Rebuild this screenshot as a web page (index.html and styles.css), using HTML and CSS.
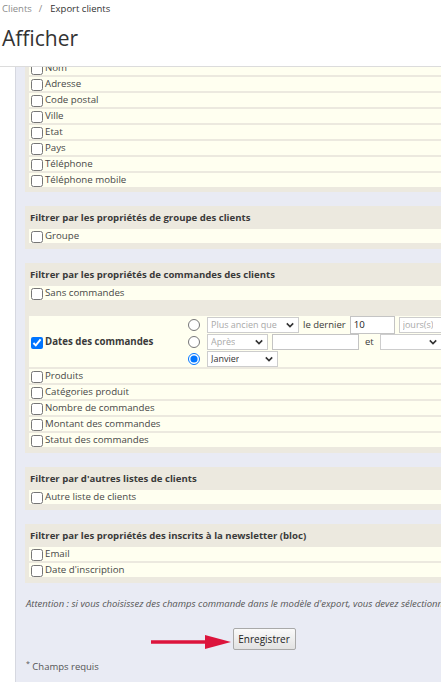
FILE: index.html
```html
<!DOCTYPE html>
<html lang="fr">
<head>
<meta charset="utf-8">
<title>Export clients</title>
<link rel="stylesheet" href="styles.css">
</head>
<body>
<div class="top">
  <div class="crumbs"><span class="c1">Clients</span><span class="sep">/</span><span class="c2">Export clients</span></div>
  <h1>Afficher</h1>
</div>
<div class="main">
  <div class="sec first">
    <div class="row"><input type="checkbox"><span>Nom</span></div>
    <div class="row"><input type="checkbox"><span>Adresse</span></div>
    <div class="row"><input type="checkbox"><span>Code postal</span></div>
    <div class="row"><input type="checkbox"><span>Ville</span></div>
    <div class="row"><input type="checkbox"><span>Etat</span></div>
    <div class="row"><input type="checkbox"><span>Pays</span></div>
    <div class="row"><input type="checkbox"><span>Téléphone</span></div>
    <div class="row"><input type="checkbox"><span>Téléphone mobile</span></div>
  </div>

  <div class="sec">
    <h2>Filtrer par les propriétés de groupe des clients</h2>
    <div class="row"><input type="checkbox"><span>Groupe</span></div>
  </div>

  <div class="sec">
    <h2>Filtrer par les propriétés de commandes des clients</h2>
    <div class="row"><input type="checkbox"><span>Sans commandes</span></div>
    <div class="row big">
      <div class="biglabel"><input type="checkbox" checked><span>Dates des commandes</span></div>
      <div class="controls">
        <div class="line">
          <input type="radio" name="d">
          <span class="sel dis w92"><span class="t">Plus ancien que</span><svg class="chev" viewBox="0 0 10 6"><path d="M1 1 L5 5 L9 1"/></svg></span>
          <span class="lbl">le dernier</span>
          <span class="inp tall w45">10</span>
          <span class="sel dis w80"><span class="t">jours(s)</span><svg class="chev" viewBox="0 0 10 6"><path d="M1 1 L5 5 L9 1"/></svg></span>
        </div>
        <div class="line">
          <input type="radio" name="d">
          <span class="sel dis w61"><span class="t">Après</span><svg class="chev" viewBox="0 0 10 6"><path d="M1 1 L5 5 L9 1"/></svg></span>
          <span class="inp w87"></span>
          <span class="lbl et">et</span>
          <span class="sel dis w62"><span class="t"></span><svg class="chev" viewBox="0 0 10 6"><path d="M1 1 L5 5 L9 1"/></svg></span>
        </div>
        <div class="line">
          <input type="radio" name="d" checked>
          <span class="sel w71"><span class="t">Janvier</span><svg class="chev" viewBox="0 0 10 6"><path d="M1 1 L5 5 L9 1"/></svg></span>
        </div>
      </div>
    </div>
    <div class="row"><input type="checkbox"><span>Produits</span></div>
    <div class="row"><input type="checkbox"><span>Catégories produit</span></div>
    <div class="row"><input type="checkbox"><span>Nombre de commandes</span></div>
    <div class="row"><input type="checkbox"><span>Montant des commandes</span></div>
    <div class="row"><input type="checkbox"><span>Statut des commandes</span></div>
  </div>

  <div class="sec">
    <h2>Filtrer par d'autres listes de clients</h2>
    <div class="row"><input type="checkbox"><span>Autre liste de clients</span></div>
  </div>

  <div class="sec">
    <h2>Filtrer par les propriétés des inscrits à la newsletter (bloc)</h2>
    <div class="row"><input type="checkbox"><span>Email</span></div>
    <div class="row"><input type="checkbox"><span>Date d'inscription</span></div>
  </div>

  <p class="attn">Attention : si vous choisissez des champs commande dans le modèle d'export, vous devez sélectionner au moins une date de commande.</p>

  <div class="actions">
    <button class="btn">Enregistrer</button>
    <svg class="arrow" viewBox="0 0 84 18"><path class="shaft" d="M2 9 L60 9"/><path class="head" d="M56 2 L82 9 L56 16 Z"/></svg>
  </div>

  <p class="req"><sup>*</sup> Champs requis</p>
</div>
</body>
</html>
```
FILE: styles.css
```css
html, body {
  margin: 0;
  padding: 0;
  background: #fff;
  overflow: hidden;
}
body {
  width: 441px;
  height: 682px;
  font-family: "Open Sans", "Noto Sans", sans-serif;
  color: #474747;
}
.top {
  height: 66px;
  border-bottom: 1px solid #dcdcdc;
}
.crumbs {
  font-size: 9.5px;
  line-height: 14px;
  padding: 2px 0 0 2px;
}
.crumbs .c1 { color: #8c8c8c; }
.crumbs .sep { color: #8c8c8c; margin: 0 8px 0 7px; }
.crumbs .c2 { color: #333; }
h1 {
  margin: 8px 0 0 2px;
  font-weight: 400;
  font-size: 21px;
  line-height: 28px;
  color: #333;
}
.main {
  margin-left: 15px;
  border-left: 1px solid #d6d8e0;
  background: #e9ebf4;
  height: 615px;
  width: 488px;
  box-sizing: border-box;
  padding: 0 0 0 9px;
  overflow: hidden;
}
.sec {
  background: #ece9df;
  padding: 0 0 6px 4px;
  margin-bottom: 14px;
}
.sec.first {
  margin-top: -6px;
  padding-bottom: 5px;
}
.sec h2 {
  margin: 0;
  padding: 4px 1px;
  font-size: 9.6px;
  line-height: 15px;
  font-weight: 700;
  color: #3a3a3a;
}
.row {
  background: #fffff0;
  height: 14px;
  margin-bottom: 2px;
  display: flex;
  align-items: center;
  font-size: 9.7px;
  line-height: 14px;
  white-space: nowrap;
}
.row:last-child { margin-bottom: 0; }
.row input[type=checkbox] {
  width: 12px;
  height: 12px;
  margin: 2px 2px 0 2px;
}
.row.big {
  height: auto;
  margin-top: 16px;
  display: grid;
  grid-template-columns: 159px auto;
  align-items: center;
}
.biglabel {
  display: flex;
  align-items: center;
  font-weight: 700;
  color: #3a3a3a;
}
.controls {
  display: flex;
  flex-direction: column;
}
.line {
  height: 17px;
  display: flex;
  align-items: center;
  gap: 4px;
}
.line input[type=radio] {
  width: 12px;
  height: 12px;
  margin: 0 3px 0 0;
}
.sel {
  box-sizing: border-box;
  height: 16px;
  border: 1px solid #cdcdcd;
  background: #fff;
  display: flex;
  align-items: center;
  justify-content: space-between;
  gap: 3px;
  padding: 0 4px 0 3px;
  font-size: 9px;
  color: #333;
}
.sel .t { overflow: hidden; white-space: nowrap; }
.sel.dis { color: #a9a9a9; }
.chev {
  flex: none;
  width: 8px;
  height: 6px;
  fill: none;
  stroke: #333;
  stroke-width: 2;
}
.w92 { width: 92px; }
.w80 { width: 80px; flex: none; }
.w61 { width: 61px; }
.w62 { width: 62px; }
.w71 { width: 71px; }
.w45 { width: 45px; }
.w87 { width: 87px; }
.lbl { font-size: 9.5px; color: #3a3a3a; }
.lbl.et { margin: 0 2px; }
.inp {
  box-sizing: border-box;
  height: 16px;
  border: 1px solid #c4c4c4;
  background: #fff;
  font-size: 9.7px;
  color: #222;
  padding: 0 3px;
  line-height: 14px;
}
.inp.tall { height: 18px; line-height: 16px; }
.attn {
  margin: 14px 0 0 1px;
  font-size: 9.5px;
  font-style: italic;
  line-height: 14px;
  color: #555;
  white-space: nowrap;
}
.actions {
  position: relative;
  display: flex;
  justify-content: center;
  margin-top: 17px;
}
.btn {
  font-family: inherit;
  font-size: 10px;
  color: #222;
  height: 22px;
  width: 63px;
  padding: 0;
  border: 1px solid #a9a9a9;
  border-radius: 2px;
  background: linear-gradient(#fafafa, #e2e2e2);
}
.arrow {
  position: absolute;
  left: 124px;
  top: 5px;
  width: 84px;
  height: 18px;
}
.arrow .shaft { stroke: #dc143c; stroke-width: 3.5; }
.arrow .head { fill: #dc143c; }
.req {
  margin: 7px 0 0 1px;
  font-size: 9.5px;
  line-height: 14px;
  color: #555;
}
.req sup { font-size: 7px; }
```
